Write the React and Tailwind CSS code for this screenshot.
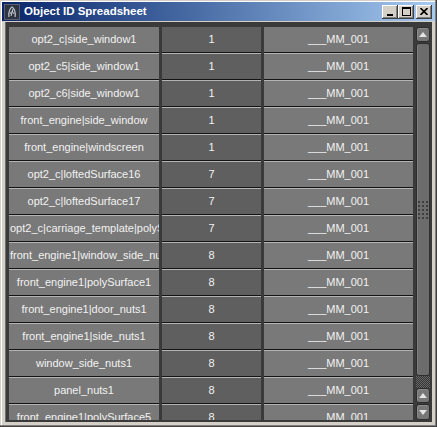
import React from "react";

const rows = [
  ["opt2_c|side_window1", "1"],
  ["opt2_c5|side_window1", "1"],
  ["opt2_c6|side_window1", "1"],
  ["front_engine|side_window", "1"],
  ["front_engine|windscreen", "1"],
  ["opt2_c|loftedSurface16", "7"],
  ["opt2_c|loftedSurface17", "7"],
  ["opt2_c|carriage_template|polySurface12", "7"],
  ["front_engine1|window_side_nuts2", "8"],
  ["front_engine1|polySurface1", "8"],
  ["front_engine1|door_nuts1", "8"],
  ["front_engine1|side_nuts1", "8"],
  ["window_side_nuts1", "8"],
  ["panel_nuts1", "8"],
  ["front_engine1|polySurface5", "8"],
];

function Cell({ text, width, dark }) {
  return (
    <div className={`${width} shrink-0 flex flex-col`}>
      <div
        className={`h-[25px] overflow-hidden whitespace-nowrap text-center leading-[25px] px-px text-[11px] text-[#f2f2f2] ${
          dark ? "bg-[#5f5f5f]" : "bg-[#797979]"
        }`}
      >
        {text}
      </div>
      <div className="h-px bg-[#141414]" />
      <div className="h-px bg-[#b4b4b4]" />
    </div>
  );
}

function TitleButton({ children, className = "" }) {
  return (
    <div
      className={`w-[16px] h-[14px] bg-[#d4d0c8] flex items-center justify-center shadow-[inset_-1px_-1px_0_#404040,inset_1px_1px_0_#fff,inset_-2px_-2px_0_#808080] ${className}`}
    >
      {children}
    </div>
  );
}

function ScrollButton({ up, className = "" }) {
  return (
    <div
      className={`shrink-0 rounded-[3px] bg-[#777] border border-[#2c2c2c] flex items-center justify-center shadow-[inset_1px_1px_0_#8c8c8c] ${className}`}
    >
      <svg width="8" height="5" viewBox="0 0 8 5">
        {up ? (
          <polygon points="0,5 8,5 4,0" fill="#e4e4e4" />
        ) : (
          <polygon points="0,0 8,0 4,5" fill="#e4e4e4" />
        )}
      </svg>
    </div>
  );
}

export default function App() {
  return (
    <div
      className="w-[437px] h-[427px] bg-[#d4d0c8] flex flex-col p-[2px] shadow-[inset_-1px_-1px_0_#404040,inset_-2px_-2px_0_#808080,inset_1px_1px_0_#d4d0c8,inset_2px_2px_0_#fff] overflow-hidden"
      style={{ fontFamily: '"Liberation Sans", Arial, sans-serif' }}
    >
      {/* title bar */}
      <div className="h-[19px] shrink-0 flex items-center pl-[2px] pr-[3px] bg-gradient-to-r from-[#0a246a] to-[#a6caf0]">
        <svg width="16" height="16" viewBox="0 0 16 16" className="shrink-0">
          <rect x="0" y="0" width="16" height="16" fill="#2d3340" />
          <rect x="0.5" y="0.5" width="15" height="15" fill="none" stroke="#5a6070" />
          <path d="M5 13 C4 9 6 4 8 3 C10 4 12 8 11 13" fill="none" stroke="#b8bcc4" strokeWidth="1.3" />
          <path d="M6 10 C7 7 9 7 10 10 M7 12 L9 5" fill="none" stroke="#d0d2d8" strokeWidth="1" />
        </svg>
        <span className="ml-[4px] text-[11.5px] font-bold text-white leading-none whitespace-nowrap">
          Object ID Spreadsheet
        </span>
        <div className="ml-auto flex items-center">
          <TitleButton>
            <svg width="8" height="8" viewBox="0 0 8 8">
              <rect x="1" y="6" width="6" height="2" fill="#000" />
            </svg>
          </TitleButton>
          <TitleButton>
            <svg width="9" height="9" viewBox="0 0 9 9">
              <rect x="0.5" y="0.5" width="8" height="8" fill="none" stroke="#000" />
              <rect x="0" y="0" width="9" height="2" fill="#000" />
            </svg>
          </TitleButton>
          <TitleButton className="ml-[2px]">
            <svg width="8" height="7" viewBox="0 0 8 7">
              <path d="M0.5 0 L7.5 7 M7.5 0 L0.5 7" stroke="#000" strokeWidth="1.6" />
            </svg>
          </TitleButton>
        </div>
      </div>

      {/* content panel */}
      <div className="mt-px mx-[3px] mb-[3px] flex-1 min-h-0 bg-[#3a3a3a] border-l border-[#6e6e6e] pl-[3px] pt-[5px] pb-[2px] pr-[2px] flex gap-[3px]">
        <div className="w-[404px] shrink-0 overflow-hidden flex flex-col">
          {rows.map(([name, id], i) => (
            <div key={i} className="flex gap-[3px] shrink-0">
              <Cell text={name} width="w-[150px]" />
              <Cell text={id} width="w-[99px]" dark />
              <Cell text="___MM_001" width="w-[149px]" />
            </div>
          ))}
        </div>

        {/* scrollbar */}
        <div className="w-[14px] shrink-0 flex flex-col">
          <ScrollButton up className="h-[15px]" />
          <div className="mt-px flex-1 rounded-[3px] bg-[#6c6c6c] border border-[#2e2e2e] shadow-[inset_1px_0_0_#7e7e7e] flex items-center justify-center">
            <div className="grid grid-cols-3 gap-[2px]">
              {Array.from({ length: 15 }).map((_, i) => (
                <div key={i} className="w-[2px] h-[2px] bg-[#3e3e3e]" />
              ))}
            </div>
          </div>
          <div className="h-[12px] shrink-0 bg-[image:repeating-conic-gradient(#343434_0%_25%,#686868_0%_50%)] bg-[length:2px_2px]" />
          <ScrollButton up className="h-[15px]" />
          <ScrollButton className="mt-px h-[16px]" />
        </div>
      </div>
    </div>
  );
}
